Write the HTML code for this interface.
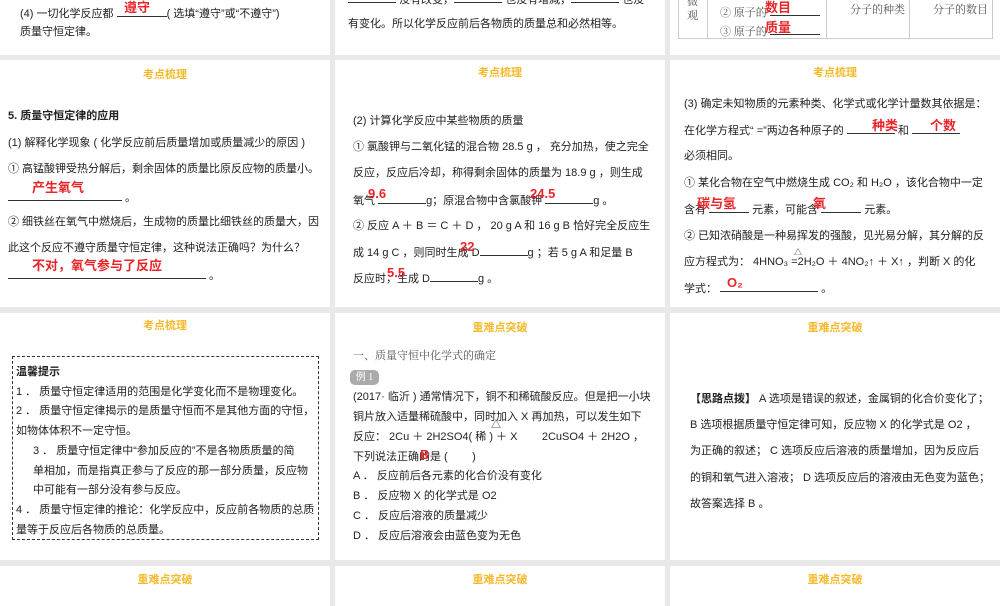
<!DOCTYPE html>
<html><head><meta charset="utf-8"><style>
*{margin:0;padding:0;box-sizing:border-box}
body{width:1000px;height:600px;background:#e9e9e9;position:relative;overflow:hidden;font-family:"Liberation Sans","Noto Sans CJK SC",sans-serif;font-size:11px;color:#222}
.s{position:absolute;background:#fff;overflow:hidden}
.t{position:absolute;white-space:nowrap;line-height:14px}
.h{position:absolute;width:100%;text-align:center;color:#f6b92b;font-weight:bold;font-size:11px}
.r{color:#e8262a;font-weight:bold;font-size:13px;position:absolute;white-space:nowrap;line-height:14px}
.u{display:inline-block;border-bottom:1px solid #333;height:11px;vertical-align:baseline}
.serif{font-family:"Liberation Serif","Noto Serif CJK SC",serif}
</style></head><body>
<!-- Row A -->
<div class="s" style="left:0;top:0;width:330px;height:55px">
<div class="t" style="left:20px;top:6px">(4) 一切化学反应都 <span class="u" style="width:50px"></span>( 选填“遵守”或“不遵守”)</div>
<div class="r" style="left:124px;top:1px">遵守</div>
<div class="t" style="left:20px;top:25px">质量守恒定律。</div>
</div>
<div class="s" style="left:335px;top:0;width:330px;height:55px">
<div class="t" style="left:13px;top:-8px"><span class="u" style="width:48px"></span> 没有改变，<span class="u" style="width:48px"></span> 也没有增减，<span class="u" style="width:48px"></span> 也没</div>
<div class="t" style="left:13px;top:17px">有变化。所以化学反应前后各物质的质量总和必然相等。</div>
</div>
<div class="s" style="left:670px;top:0;width:330px;height:55px">
<div style="position:absolute;left:8px;top:-5px;width:315px;height:44px;border:1px solid #ccc"></div>
<div style="position:absolute;left:37px;top:-5px;width:1px;height:44px;background:#ccc"></div>
<div style="position:absolute;left:156px;top:-5px;width:1px;height:44px;background:#ccc"></div>
<div style="position:absolute;left:239px;top:-5px;width:1px;height:44px;background:#ccc"></div>
<div class="t serif" style="left:17px;top:-5px;color:#555;line-height:14px">微<br>观</div>
<div class="t serif" style="left:50px;top:5px;color:#555">② 原子的 <span class="u" style="width:50px"></span></div>
<div class="t serif" style="left:50px;top:24px;color:#555">③ 原子的 <span class="u" style="width:50px"></span></div>
<div class="r" style="left:95px;top:1px">数目</div>
<div class="r" style="left:95px;top:21px">质量</div>
<div class="t serif" style="left:180px;top:3px;color:#555">分子的种类</div>
<div class="t serif" style="left:263px;top:3px;color:#555">分子的数目</div>
</div>
<!-- Row B -->
<div class="s" style="left:0;top:60px;width:330px;height:247px">
<div class="h" style="top:6px">考点梳理</div>
<div class="t" style="left:8px;top:49px;font-weight:bold">5. 质量守恒定律的应用</div>
<div class="t" style="left:8px;top:76px">(1) 解释化学现象 ( 化学反应前后质量增加或质量减少的原因 )</div>
<div class="t" style="left:8px;top:102px">① 高锰酸钾受热分解后，剩余固体的质量比原反应物的质量小。</div>
<div class="r" style="left:32px;top:121px">产生氧气</div>
<div class="t" style="left:8px;top:130px"><span class="u" style="width:114px"></span> 。</div>
<div class="t" style="left:8px;top:155px">② 细铁丝在氧气中燃烧后，生成物的质量比细铁丝的质量大，因</div>
<div class="t" style="left:8px;top:181px">此这个反应不遵守质量守恒定律，这种说法正确吗？为什么？</div>
<div class="r" style="left:32px;top:199px">不对，氧气参与了反应</div>
<div class="t" style="left:8px;top:208px"><span class="u" style="width:198px"></span> 。</div>
</div>
<div class="s" style="left:335px;top:60px;width:330px;height:247px">
<div class="h" style="top:4px">考点梳理</div>
<div class="t" style="left:18px;top:54px">(2) 计算化学反应中某些物质的质量</div>
<div class="t" style="left:18px;top:80px">① 氯酸钾与二氧化锰的混合物 28.5 g ， 充分加热，使之完全</div>
<div class="t" style="left:18px;top:106px">反应，反应后冷却，称得剩余固体的质量为 18.9 g ，则生成</div>
<div class="t" style="left:18px;top:133px">氧气 <span class="u" style="width:48px"></span>g；原混合物中含氯酸钾 <span class="u" style="width:48px"></span>g 。</div>
<div class="r" style="left:33px;top:127px">9.6</div>
<div class="r" style="left:195px;top:127px">24.5</div>
<div class="t" style="left:18px;top:159px">② 反应 A ＋ B ＝ C ＋ D ， 20 g A 和 16 g B 恰好完全反应生</div>
<div class="t" style="left:18px;top:185px">成 14 g C ，则同时生成 D<span class="u" style="width:48px"></span>g ；若 5 g A 和足量 B</div>
<div class="r" style="left:125px;top:180px">22</div>
<div class="t" style="left:18px;top:211px">反应时，生成 D<span class="u" style="width:48px"></span>g 。</div>
<div class="r" style="left:52px;top:206px">5.5</div>
</div>
<div class="s" style="left:670px;top:60px;width:330px;height:247px">
<div class="h" style="top:4px">考点梳理</div>
<div class="t" style="left:14px;top:37px">(3) 确定未知物质的元素种类、化学式或化学计量数其依据是：</div>
<div class="t" style="left:14px;top:63px">在化学方程式“ =”两边各种原子的 <span class="u" style="width:48px"></span> 和 <span class="u" style="width:48px"></span></div>
<div class="r" style="left:202px;top:59px">种类</div>
<div class="r" style="left:260px;top:59px">个数</div>
<div class="t" style="left:14px;top:89px">必须相同。</div>
<div class="t" style="left:14px;top:116px">① 某化合物在空气中燃烧生成 CO₂ 和 H₂O ，该化合物中一定</div>
<div class="t" style="left:14px;top:142px">含有 <span class="u" style="width:40px"></span> 元素，可能含 <span class="u" style="width:40px"></span> 元素。</div>
<div class="r" style="left:27px;top:137px">碳与氢</div>
<div class="r" style="left:143px;top:137px">氧</div>
<div class="t" style="left:14px;top:169px">② 已知浓硝酸是一种易挥发的强酸，见光易分解，其分解的反</div>
<div class="t" style="left:124px;top:186px;font-size:8px">△</div>
<div class="t" style="left:14px;top:195px">应方程式为： 4HNO₃ =2H₂O ＋ 4NO₂↑ ＋ X↑ ，判断 X 的化</div>
<div class="t" style="left:14px;top:221px">学式： <span class="u" style="width:98px"></span> 。</div>
<div class="r" style="left:57px;top:216px">O₂</div>
</div>
<!-- Row C -->
<div class="s" style="left:0;top:313px;width:330px;height:247px">
<div class="h" style="top:4px">考点梳理</div>
<div style="position:absolute;left:12px;top:43px;width:307px;height:184px;border:1px dashed #333"></div>
<div class="t" style="left:16px;top:52px;font-weight:bold">温馨提示</div>
<div class="t" style="left:16px;top:72px">1 ． 质量守恒定律适用的范围是化学变化而不是物理变化。</div>
<div class="t" style="left:16px;top:91px">2 ． 质量守恒定律揭示的是质量守恒而不是其他方面的守恒，</div>
<div class="t" style="left:16px;top:111px">如物体体积不一定守恒。</div>
<div class="t" style="left:33px;top:131px">3 ． 质量守恒定律中“参加反应的”不是各物质质量的简</div>
<div class="t" style="left:33px;top:151px">单相加，而是指真正参与了反应的那一部分质量，反应物</div>
<div class="t" style="left:33px;top:170px">中可能有一部分没有参与反应。</div>
<div class="t" style="left:16px;top:190px">4 ． 质量守恒定律的推论：化学反应中，反应前各物质的总质</div>
<div class="t" style="left:16px;top:210px">量等于反应后各物质的总质量。</div>
</div>
<div class="s" style="left:335px;top:313px;width:330px;height:247px">
<div class="h" style="top:6px">重难点突破</div>
<div class="t serif" style="left:18px;top:36px;color:#555">一、质量守恒中化学式的确定</div>
<div style="position:absolute;left:15px;top:57px;width:29px;height:15px;border-radius:5px;background:#aaa;color:#fff;font-size:10px;text-align:center;line-height:15px;font-family:'Liberation Serif',serif">例 1</div>
<div class="t" style="left:18px;top:77px">(2017· 临沂 ) 通常情况下，铜不和稀硫酸反应。但是把一小块</div>
<div class="t" style="left:18px;top:97px">铜片放入适量稀硫酸中，同时加入 X 再加热，可以发生如下</div>
<div class="t" style="left:156px;top:106px;font-size:10px">△</div>
<div class="t" style="left:18px;top:117px">反应： 2Cu ＋ 2H2SO4( 稀 ) ＋ X&nbsp;&nbsp;&nbsp;&nbsp;&nbsp;&nbsp;&nbsp; 2CuSO4 ＋ 2H2O ，</div>
<div class="t" style="left:18px;top:137px">下列说法正确的是 (&nbsp;&nbsp;&nbsp;&nbsp;&nbsp;&nbsp;&nbsp;&nbsp;)</div>
<div class="r" style="left:85px;top:135px">B</div>
<div class="t" style="left:18px;top:156px">A ． 反应前后各元素的化合价没有变化</div>
<div class="t" style="left:18px;top:176px">B ． 反应物 X 的化学式是 O2</div>
<div class="t" style="left:18px;top:196px">C ． 反应后溶液的质量减少</div>
<div class="t" style="left:18px;top:216px">D ． 反应后溶液会由蓝色变为无色</div>
</div>
<div class="s" style="left:670px;top:313px;width:330px;height:247px">
<div class="h" style="top:6px">重难点突破</div>
<div class="t" style="left:20px;top:79px"><b>【思路点拨】</b> A 选项是错误的叙述，金属铜的化合价变化了；</div>
<div class="t" style="left:20px;top:105px">B 选项根据质量守恒定律可知，反应物 X 的化学式是 O2 ，</div>
<div class="t" style="left:20px;top:131px">为正确的叙述； C 选项反应后溶液的质量增加，因为反应后</div>
<div class="t" style="left:20px;top:158px">的铜和氧气进入溶液； D 选项反应后的溶液由无色变为蓝色；</div>
<div class="t" style="left:20px;top:184px">故答案选择 B 。</div>
</div>
<!-- Row D -->
<div class="s" style="left:0;top:566px;width:330px;height:40px"><div class="h" style="top:5px">重难点突破</div></div>
<div class="s" style="left:335px;top:566px;width:330px;height:40px"><div class="h" style="top:5px">重难点突破</div></div>
<div class="s" style="left:670px;top:566px;width:330px;height:40px"><div class="h" style="top:5px">重难点突破</div></div>
</body></html>
